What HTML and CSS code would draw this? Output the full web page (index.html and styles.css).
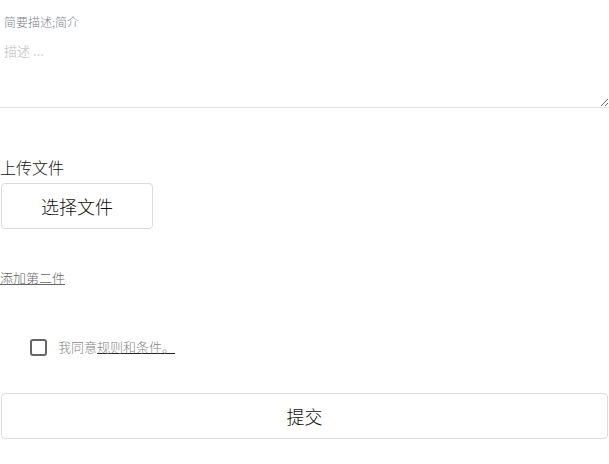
FILE: index.html
```html
<!DOCTYPE html>
<html lang="zh">
  <head>
    <meta charset="UTF-8" />
    <meta name="viewport" content="width=device-width, initial-scale=1.0" />
    <title>Document</title>
    <link rel="stylesheet" href="styles.css">
  </head>
  <body>
    <form class="upload-form">
      <label class="field-label" for="summary">简要描述;简介</label>
      <textarea id="summary" class="summary" placeholder="描述 ..."></textarea>

      <div class="upload">
        <div class="upload-title">上传文件</div>
        <button type="button" class="btn file-btn">选择文件</button>
      </div>

      <a href="#" class="add-link">添加第二件</a>

      <label class="agree">
        <input type="checkbox" class="agree-box" />
        <span class="agree-text">我同意<a href="#" class="rules-link">规则和条件。</a></span>
      </label>

      <button type="submit" class="btn submit-btn">提交</button>
    </form>
  </body>
</html>
```

FILE: styles.css
```css
* {
  box-sizing: border-box;
}

body {
  margin: 0;
  font-family: "Noto Sans CJK SC", "Noto Sans", sans-serif;
  font-weight: 300;
  color: #111;
  background: #fff;
}

.upload-form {
  display: flex;
  flex-direction: column;
  align-items: flex-start;
}

.field-label {
  display: block;
  padding: 14px 4px 0;
  font-size: 12px;
  line-height: 16px;
  color: #7d848e;
}

.summary {
  display: block;
  width: 100%;
  height: 78px;
  padding: 12px 4px 6px;
  border: none;
  border-bottom: 1px solid #dde2e6;
  font-family: inherit;
  font-size: 13px;
  line-height: 18px;
  outline: none;
}

.summary::placeholder {
  color: #cfcfcf;
}

.upload {
  margin-top: 48px;
}

.upload-title {
  font-size: 16px;
  line-height: 22px;
  margin-bottom: 5px;
}

.btn {
  background: #fff;
  border: 1px solid #dcdcdc;
  border-radius: 4px;
  font-family: inherit;
  font-size: 18px;
  font-weight: 300;
  color: #111;
  height: 46px;
}

.file-btn {
  width: 152px;
  margin-left: 1px;
}

.add-link {
  margin-top: 40px;
  font-size: 13px;
  line-height: 18px;
  color: #666;
  text-decoration: underline;
}

.agree {
  display: flex;
  align-items: center;
  gap: 11px;
  margin-top: 51px;
  padding-left: 30px;
  font-size: 13px;
  line-height: 18px;
  color: #858585;
}

.agree-box {
  appearance: none;
  width: 17px;
  height: 17px;
  margin: 0;
  border: 2px solid #666;
  border-radius: 3px;
}

.rules-link {
  color: #858585;
  text-decoration: underline;
  text-decoration-color: #222;
}

.submit-btn {
  width: calc(100% - 2px);
  margin: 37px 1px 0;
}
```
